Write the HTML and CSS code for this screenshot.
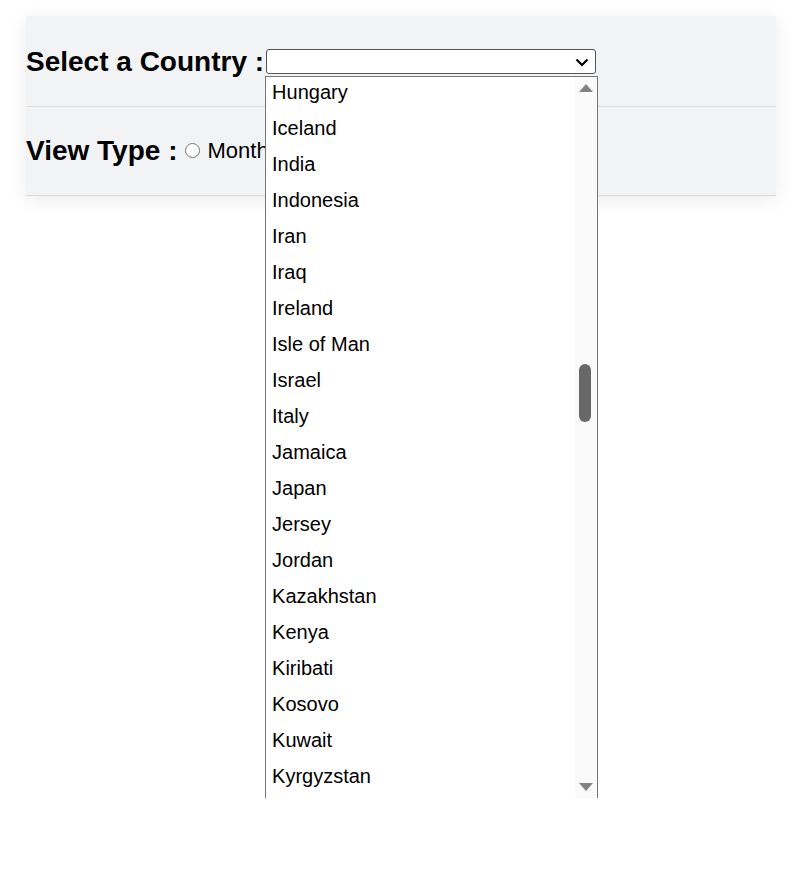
FILE: index.html
```html
<!DOCTYPE html>
<html>
<head>
<meta charset="utf-8">
<link rel="stylesheet" href="styles.css">
</head>
<body>
<div class="page">
  <div class="card">
    <div class="row row-country">
      <span class="label">Select a Country :</span>
      <div class="select-wrap">
        <div class="select">
          <svg class="chev" width="14" height="9" viewBox="0 0 14 9"><path d="M1.5 1.5 L7 7 L12.5 1.5" fill="none" stroke="#000" stroke-width="2.2"/></svg>
        </div>
        <div class="listbox">
          <ul class="options">
            <li>Hungary</li>
            <li>Iceland</li>
            <li>India</li>
            <li>Indonesia</li>
            <li>Iran</li>
            <li>Iraq</li>
            <li>Ireland</li>
            <li>Isle of Man</li>
            <li>Israel</li>
            <li>Italy</li>
            <li>Jamaica</li>
            <li>Japan</li>
            <li>Jersey</li>
            <li>Jordan</li>
            <li>Kazakhstan</li>
            <li>Kenya</li>
            <li>Kiribati</li>
            <li>Kosovo</li>
            <li>Kuwait</li>
            <li>Kyrgyzstan</li>
          </ul>
          <div class="scrollbar">
            <svg class="arrow up" width="16" height="10" viewBox="0 0 16 10"><path d="M8 1 L15 9 L1 9 Z" fill="#838383"/></svg>
            <div class="thumb"></div>
            <svg class="arrow down" width="16" height="10" viewBox="0 0 16 10"><path d="M1 1 L15 1 L8 9 Z" fill="#838383"/></svg>
          </div>
        </div>
      </div>
    </div>
    <div class="row row-view">
      <span class="label">View Type :</span>
      <span class="radio"></span>
      <span class="opt">Monthly</span>
    </div>
  </div>
</div>
</body>
</html>
```
FILE: styles.css
```css
html, body {
  margin: 0;
  padding: 0;
  background: #fff;
  font-family: "Liberation Sans", Arial, sans-serif;
  color: #000;
}
body {
  min-height: 895px;
}
.page {
  padding: 16px 20px 0 26px;
  min-height: 879px;
}
.card {
  width: 750px;
  background: #f2f3f5;
  box-shadow: 0 4px 18px rgba(0, 0, 0, 0.08);
  position: relative;
}
.row {
  display: flex;
  align-items: center;
  border-bottom: 1px solid #dcdcdc;
}
.row-country {
  height: 90px;
  position: relative;
  z-index: 2;
}
.row-view {
  height: 88px;
}
.label {
  font-weight: bold;
  font-size: 28px;
}
.row-country .label {
  margin-top: 2px;
}
.select-wrap {
  position: relative;
  margin-left: 2px;
  align-self: flex-start;
  margin-top: 33px;
}
.select {
  width: 328px;
  height: 23px;
  border: 1px solid #555;
  border-radius: 3px;
  background: #fff;
  position: relative;
}
.chev {
  position: absolute;
  right: 6px;
  top: 8px;
}
.listbox {
  position: absolute;
  left: -1px;
  top: 27px;
  width: 331px;
  height: 721px;
  border-left: 1px solid #767676;
  border-right: 1px solid #767676;
  border-top: 1px solid #767676;
  background: #fff;
  overflow: hidden;
  z-index: 5;
  display: flex;
}
.options {
  list-style: none;
  margin: -3px 0 0 0;
  padding: 0;
  flex: 1;
}
.options li {
  height: 36px;
  line-height: 36px;
  font-size: 20px;
  padding-left: 6px;
}
.scrollbar {
  width: 22px;
  background: #fafafa;
  position: relative;
}
.arrow {
  position: absolute;
  left: 3px;
}
.arrow.up { top: 6px; }
.arrow.down { top: 705px; }
.thumb {
  position: absolute;
  left: 4px;
  top: 287px;
  width: 12px;
  height: 58px;
  border-radius: 6px;
  background: #686868;
}
.radio {
  box-sizing: border-box;
  width: 15px;
  height: 15px;
  border: 1px solid #767676;
  border-radius: 50%;
  background: #fff;
  margin-left: 8px;
  margin-top: -2px;
}
.opt {
  font-size: 22px;
  margin-left: 7px;
}
```
